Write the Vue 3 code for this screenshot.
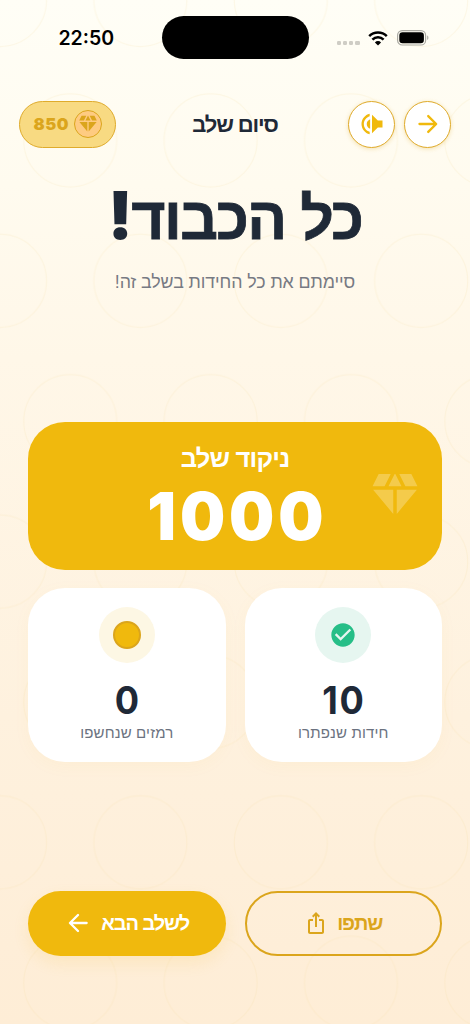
<script setup>
const stats = [
  { id: 'solved', value: '10', label: 'חידות שנפתרו' },
  { id: 'hints', value: '0', label: 'רמזים שנחשפו' },
]
const gem =
  'M12.16 3h-.32L9.21 8.25h5.58zM16.46 8.25h5.16L19 3h-5.16zM21.38 9.75h-8.63V20.1zM11.25 20.1V9.75H2.62zM7.54 8.25 10.16 3H5L2.38 8.25z'
</script>

<template>
  <div class="screen" dir="rtl">
    <svg class="pattern" width="470" height="1024" aria-hidden="true">
      <defs>
        <pattern id="rings" width="140.4" height="280.8" patternUnits="userSpaceOnUse">
          <g fill="none" stroke="#f5d98c" stroke-opacity=".14" stroke-width="1.2">
            <circle cx="0" cy="0" r="46.5" />
            <circle cx="140.4" cy="0" r="46.5" />
            <circle cx="0" cy="280.8" r="46.5" />
            <circle cx="140.4" cy="280.8" r="46.5" />
            <circle cx="70.2" cy="140.4" r="46.5" />
          </g>
        </pattern>
      </defs>
      <rect width="470" height="1024" fill="url(#rings)" />
    </svg>

    <div class="status" dir="ltr">
      <span class="time">22:50</span>
      <span class="island"></span>
      <span class="indicators">
        <span class="dots"><i v-for="n in 4" :key="n"></i></span>
        <svg class="wifi" width="20" height="15" viewBox="0 0 20 15">
          <g fill="none" stroke="#000" stroke-width="2.5">
            <path d="M1.2 5.1a12.4 12.4 0 0 1 17.6 0" />
            <path d="M4.4 8.6a7.9 7.9 0 0 1 11.2 0" />
          </g>
          <path d="M10 14.6 6.9 11.4a4.4 4.4 0 0 1 6.2 0z" />
        </svg>
        <svg class="battery" width="32" height="16" viewBox="0 0 32 16">
          <rect x=".6" y=".6" width="28" height="14.4" rx="4.6" fill="none" stroke="#aaa9a2" stroke-width="1.2" />
          <rect x="2.3" y="2.3" width="24.6" height="11" rx="3.2" />
          <path d="M30.2 5.6c1.6.6 1.6 3.8 0 4.4z" fill="#aaa9a2" />
        </svg>
      </span>
    </div>

    <header class="bar">
      <div class="nav">
        <button class="round">
          <svg width="28" height="28" viewBox="0 0 24 24" fill="none" stroke="#f0b90d" stroke-width="2" stroke-linecap="round" stroke-linejoin="round">
            <path d="M4.7 12h14M12.2 5.2l6.800 6.800-6.800 6.800" />
          </svg>
        </button>
        <button class="round">
          <svg class="flip" width="28" height="28" viewBox="0 0 24 24" fill="#f0b90d">
            <path d="M3 9v6h4l5 5V4L7 9H3zm10.6-1v8.1c2-.9 2.9-2.3 2.9-4.1s-.9-3.1-2.9-4zM14 3.23v2.06c2.89.86 5 3.54 5 6.71s-2.11 5.85-5 6.71v2.06c4.01-.91 7-4.49 7-8.77s-2.99-7.86-7-8.77z" />
          </svg>
        </button>
      </div>
      <h2 class="title">סיום שלב</h2>
      <div class="wallet">
        <span class="coin">
          <svg width="22" height="22" viewBox="0 0 24 24" fill="#dba51c"><path :d="gem" /></svg>
        </span>
        <span class="balance">850</span>
      </div>
    </header>

    <section class="hero">
      <h1>כל הכבוד<span class="bang">!</span></h1>
      <p>סיימתם את כל החידות בשלב זה!</p>
    </section>

    <main class="content">
      <section class="score">
        <span class="score-label">ניקוד שלב</span>
        <span class="score-value">1000</span>
        <svg class="score-gem" width="56" height="56" viewBox="0 0 24 24"><path :d="gem" /></svg>
      </section>

      <div class="pair">
        <article v-for="s in stats" :key="s.id" class="stat">
          <span class="badge" :class="s.id">
            <svg v-if="s.id === 'solved'" width="28" height="28" viewBox="0 0 24 24" fill="#26be87">
              <path d="M12 2C6.48 2 2 6.48 2 12s4.48 10 10 10 10-4.48 10-10S17.52 2 12 2zm-2 15-5-5 1.41-1.41L10 14.17l7.59-7.59L19 8l-9 9z" />
            </svg>
            <span v-else class="token"></span>
          </span>
          <span class="stat-value">{{ s.value }}</span>
          <span class="stat-label">{{ s.label }}</span>
        </article>
      </div>
    </main>

    <footer class="pair actions">
      <button class="action outline">
        <span>שתפו</span>
        <svg width="24" height="24" viewBox="0 0 24 24" fill="#dba51c">
          <path d="M16 5l-1.42 1.42-1.59-1.59V16h-1.98V4.83L9.42 6.42 8 5l4-4 4 4zm4 5v11c0 1.1-.9 2-2 2H6c-1.11 0-2-.9-2-2V10c0-1.11.89-2 2-2h3v2H6v11h12V10h-3V8h3c1.1 0 2 .89 2 2z" />
        </svg>
      </button>
      <button class="action solid">
        <span>לשלב הבא</span>
        <svg width="28" height="28" viewBox="0 0 24 24" fill="none" stroke="#fff" stroke-width="2" stroke-linecap="round" stroke-linejoin="round">
          <path d="M19.4 12h-14M12 5.1 5.1 12l6.9 6.9" />
        </svg>
      </button>
    </footer>
  </div>
</template>

<style>
body {
  margin: 0;
}
</style>

<style scoped>
.screen {
  position: relative;
  box-sizing: border-box;
  width: 470px;
  height: 1024px;
  overflow: hidden;
  display: flex;
  flex-direction: column;
  background: linear-gradient(180deg, #fffef6 0%, #fffbef 18%, #fff7e8 35%, #fef1de 70%, #feedd6 100%);
  font-family: 'Liberation Sans', 'Open Sans', sans-serif;
  color: #1f2937;
}
.pattern {
  position: absolute;
  inset: 0;
}
.status,
.bar,
.hero,
.content,
.actions {
  position: relative;
}
button {
  margin: 0;
  padding: 0;
  font: inherit;
}
svg {
  display: block;
}
.status {
  display: grid;
  grid-template-columns: 1fr 147px 1fr;
  align-items: center;
  height: 75px;
}
.time {
  justify-self: center;
  margin: 1px 0 0 11px;
  font: 600 19.5px Inter, sans-serif;
  color: #000;
}
.island {
  height: 43px;
  border-radius: 22px;
  background: #000;
}
.indicators {
  display: flex;
  align-items: center;
  margin-left: 28px;
}
.dots {
  display: flex;
  gap: 2px;
  margin: 11px 8px 0 0;
}
.dots i {
  width: 4.3px;
  height: 4.3px;
  border-radius: 1.3px;
  background: #cfcdc5;
}
.wifi {
  margin-top: 1px;
}
.battery {
  margin-left: 9px;
}
.bar {
  display: grid;
  grid-template-columns: 1fr auto 1fr;
  align-items: center;
  height: 48px;
  padding: 0 19px;
  margin-top: 25px;
}
.nav {
  display: flex;
  gap: 9px;
}
.round {
  box-sizing: border-box;
  width: 47px;
  height: 47px;
  display: grid;
  place-items: center;
  border: 1.3px solid #dfab2c;
  border-radius: 50%;
  background: #fff;
  box-shadow: 0 1px 4px rgba(218, 165, 32, 0.3);
}
.flip {
  transform: scaleX(-1);
}
.title {
  margin: 1px 0 0;
  font-size: 22px;
  line-height: 32px;
  font-weight: 600;
  letter-spacing: -1.1px;
}
.wallet {
  box-sizing: border-box;
  justify-self: end;
  display: flex;
  align-items: center;
  justify-content: center;
  gap: 4.5px;
  width: 97px;
  height: 47px;
  border: 1.3px solid #dfab2c;
  border-radius: 24px;
  background: #f8da82;
}
.coin {
  box-sizing: border-box;
  width: 28px;
  height: 28px;
  display: grid;
  place-items: center;
  border: 1px solid #dba51c;
  border-radius: 50%;
  background: #fecb81;
}
.balance {
  font: 900 16.5px Inter, sans-serif;
  letter-spacing: 0.6px;
  color: #dba51c;
}
.hero {
  height: 274px;
  text-align: center;
}
.hero h1 {
  margin: 26px 0 0;
  font-size: 59px;
  line-height: 90px;
  font-weight: 700;
  letter-spacing: -1.65px;
  -webkit-text-stroke: 0.8px #1f2937;
}
.bang {
  font: 900 66px/60px Inter, sans-serif;
  -webkit-text-stroke: 0;
}
.hero p {
  margin: 5px 0 0;
  font-size: 17.8px;
  line-height: 26px;
  letter-spacing: -0.08px;
  color: #777a83;
}
.content {
  display: flex;
  flex-direction: column;
  gap: 18.5px;
  padding: 0 28px;
}
.score {
  position: relative;
  display: flex;
  flex-direction: column;
  align-items: center;
  height: 147.5px;
  border-radius: 37px;
  background: #f0b90d;
  color: #fff;
}
.score-label {
  margin-top: 18px;
  font-size: 25.5px;
  line-height: 36px;
  font-weight: 600;
  letter-spacing: -0.8px;
}
.score-value {
  margin-left: 5px;
  font: 900 66px/81px Inter, sans-serif;
  letter-spacing: 4px;
  transform: scaleX(0.965);
}
.score-gem {
  position: absolute;
  right: 19px;
  top: 45px;
  fill: rgba(255, 255, 255, 0.26);
}
.pair {
  display: grid;
  grid-template-columns: 1fr 1fr;
  gap: 19px;
}
.stat {
  display: flex;
  flex-direction: column;
  align-items: center;
  height: 174px;
  border-radius: 37px;
  background: #fff;
  box-shadow: 0 4px 18px rgba(240, 185, 13, 0.04);
}
.badge {
  display: grid;
  place-items: center;
  width: 56px;
  height: 56px;
  margin-top: 19px;
  border-radius: 50%;
}
.solved {
  background: #e6f6f0;
}
.hints {
  background: #fdf7e4;
}
.token {
  box-sizing: border-box;
  width: 28px;
  height: 28px;
  border: 2px solid #dba51c;
  border-radius: 50%;
  background: #f0b90d;
}
.stat-value {
  margin: 13px 0 0 2px;
  font: 700 38px/48px Inter, sans-serif;
  letter-spacing: 2px;
  transform: scaleX(0.95);
}
.stat-label {
  font-size: 15px;
  line-height: 18px;
  letter-spacing: 0.15px;
  color: #6b7280;
}
.actions {
  margin-top: 128.5px;
  padding: 0 28px;
}
.action {
  box-sizing: border-box;
  display: flex;
  align-items: center;
  justify-content: center;
  height: 65.5px;
  border-radius: 33px;
  font-size: 20px;
  font-weight: 600;
  letter-spacing: -1.1px;
}
.solid {
  gap: 9px;
  border: 0;
  background: #f0b90d;
  color: #fff;
  box-shadow: 0 7px 16px rgba(240, 185, 13, 0.12);
}
.outline {
  gap: 9px;
  border: 2.4px solid #dba51c;
  background: transparent;
  color: #dba51c;
}
</style>
